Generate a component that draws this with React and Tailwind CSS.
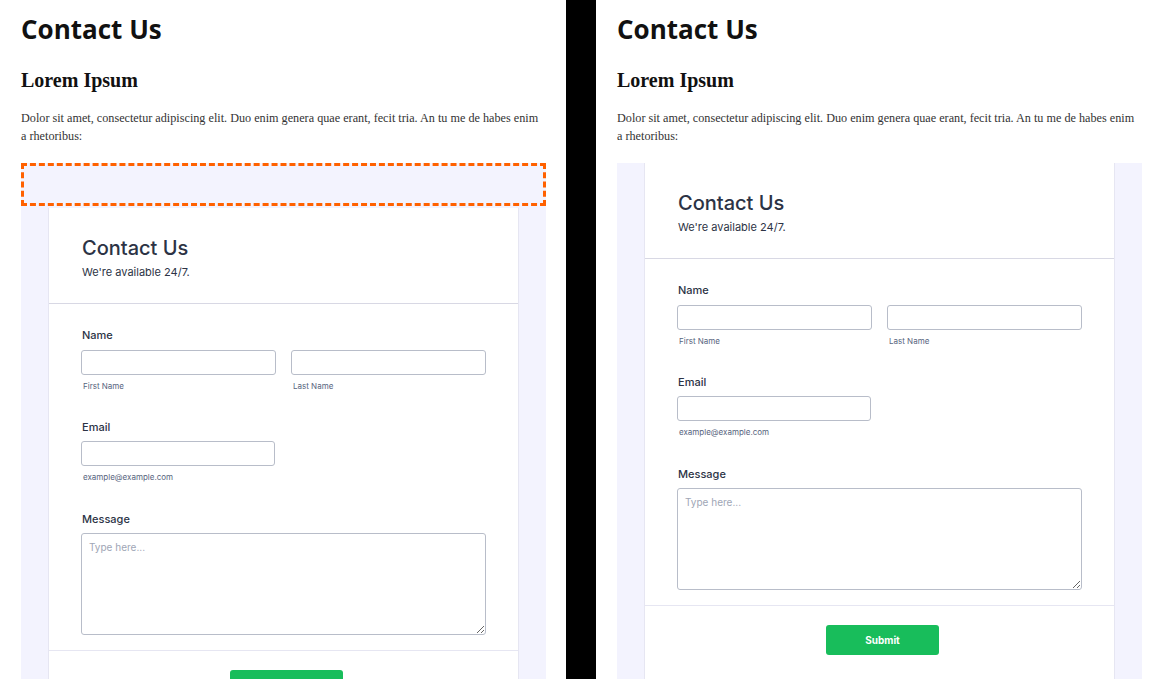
import React from 'react';

const inter = { fontFamily: 'Inter, "Liberation Sans", sans-serif' };

function FormCard() {
    return (
        <div className="mx-[27px] bg-white border-x border-[#e6e6f2]" style={inter}>
            {/* header */}
            <div className="px-[33px] pt-[27px] pb-[24px] border-b border-[#d8d8e4]">
                <h2 className="text-[20px] leading-[26px] font-medium text-[#2c3345]">Contact Us</h2>
                <p className="mt-[4px] text-[11px] leading-[14px] text-[#2c3345]">We're available 24/7.</p>
            </div>

            <div className="px-[32px] pt-[24px] pb-[15px]">
                {/* name */}
                <label className="block pl-px text-[11px] leading-[14px] font-medium text-[#2c3345]">Name</label>
                <div className="mt-[8px] grid grid-cols-2 gap-[15px]">
                    <div>
                        <input className="block w-full h-[25px] rounded-[3px] border border-[#b8bdc9] bg-white outline-none" />
                        <div className="mt-[6px] pl-[2px] text-[8px] leading-[10px] text-[#57647e]">First Name</div>
                    </div>
                    <div>
                        <input className="block w-full h-[25px] rounded-[3px] border border-[#b8bdc9] bg-white outline-none" />
                        <div className="mt-[6px] pl-[2px] text-[8px] leading-[10px] text-[#57647e]">Last Name</div>
                    </div>
                </div>

                {/* email */}
                <label className="mt-[29px] block pl-px text-[11px] leading-[14px] font-medium text-[#2c3345]">Email</label>
                <div className="mt-[7px] w-[194px]">
                    <input className="block w-full h-[25px] rounded-[3px] border border-[#b8bdc9] bg-white outline-none" />
                    <div className="mt-[6px] pl-[2px] text-[8px] leading-[10px] text-[#57647e]">example@example.com</div>
                </div>

                {/* message */}
                <label className="mt-[30px] block pl-px text-[11px] leading-[14px] font-medium text-[#2c3345]">Message</label>
                <textarea
                    placeholder="Type here..."
                    className="mt-[7px] block w-full h-[102px] rounded-[3px] border border-[#b8bdc9] bg-white px-[7px] py-[6px] text-[10px] leading-[14px] text-[#2c3345] placeholder:text-[#a0a6b6] outline-none"
                />
            </div>

            {/* footer */}
            <div className="border-t border-[#e6e6f2] pt-[19px] pb-[24px] flex justify-center pl-[6px]">
                <button className="w-[113px] h-[30px] rounded-[3px] bg-[#18bd5b] text-white text-[10px] font-bold">
                    Submit
                </button>
            </div>
        </div>
    );
}

function Panel({ spacer }) {
    return (
        <div className="w-[566px] shrink-0 bg-white pl-[21px] pr-[20px] overflow-hidden">
            <h1
                className="pt-[12px] text-[26px] leading-[34px] font-bold text-[#111]"
                style={{ fontFamily: '"Open Sans", "Liberation Sans", sans-serif' }}
            >
                Contact Us
            </h1>
            <h3
                className="mt-[22px] text-[20px] leading-[24px] font-bold text-[#111]"
                style={{ fontFamily: '"Liberation Serif", "DejaVu Serif", serif' }}
            >
                Lorem Ipsum
            </h3>
            <p
                className="mt-[17px] text-[12.2px] leading-[18px] text-[#333]"
                style={{ fontFamily: '"Liberation Serif", "DejaVu Serif", serif' }}
            >
                Dolor sit amet, consectetur adipiscing elit. Duo enim genera quae erant, fecit tria. An tu me de habes enim a rhetoribus:
            </p>
            <div className="mt-[18px] bg-[#f3f3fe]">
                {spacer && <div className="mb-[2px] h-[43px] border-[3px] border-dashed border-[#ff6100]" />}
                <FormCard />
            </div>
        </div>
    );
}

export default function App() {
    return (
        <div className="flex w-[1162px] h-[679px] overflow-hidden bg-black">
            <Panel spacer />
            <div className="w-[30px] shrink-0 bg-black" />
            <Panel />
        </div>
    );
}
